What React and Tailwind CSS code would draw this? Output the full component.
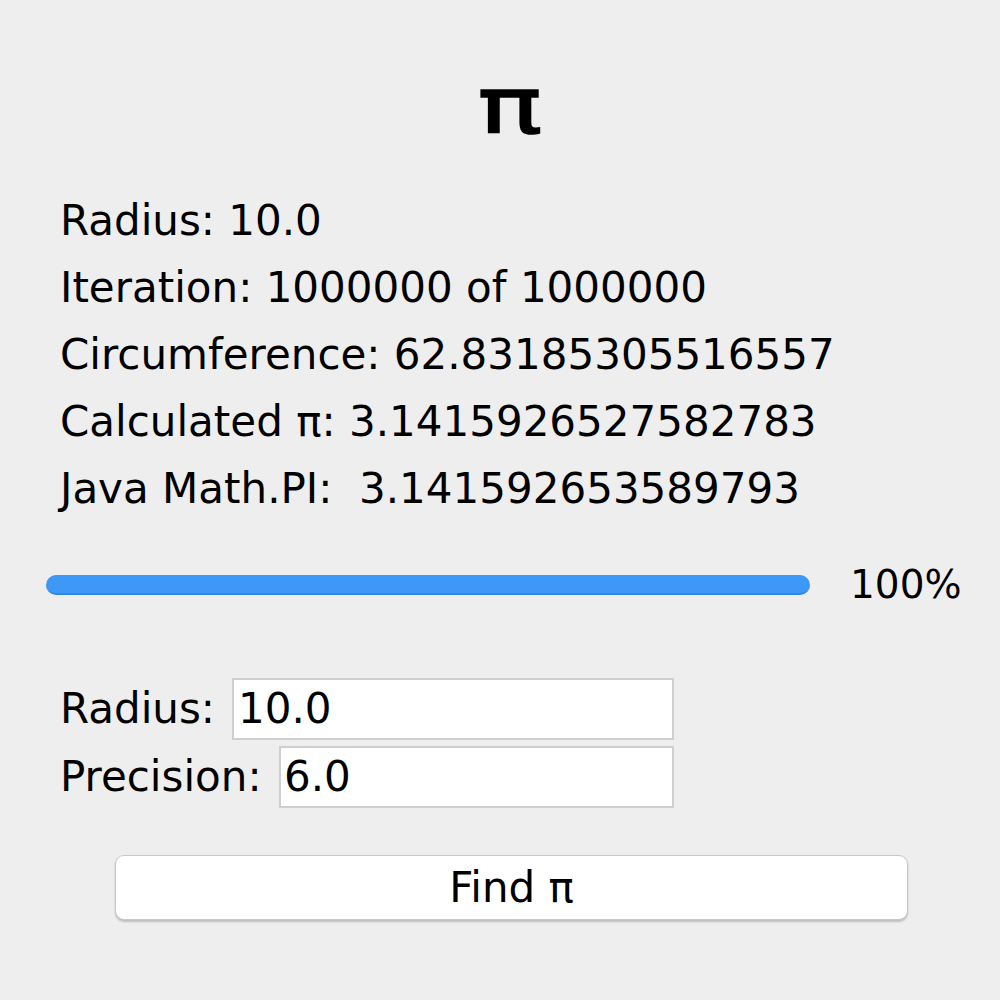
export default function App() {
  const font = { fontFamily: '"DejaVu Sans", "Liberation Sans", sans-serif' };
  return (
    <div className="w-[1000px] h-[1000px] bg-[#eeeeee] text-black" style={font}>
      <div className="flex flex-col">
        <div className="flex justify-center pt-[67px] pl-[20px]">
          <span className="text-[79px] leading-[78px] inline-block scale-x-[1.36] [-webkit-text-stroke:1.5px_black]">π</span>
        </div>
        <div className="flex flex-col pl-[60px] text-[42px] leading-[67px] mt-[42px]">
          <div>Radius: 10.0</div>
          <div>Iteration: 1000000 of 1000000</div>
          <div>Circumference: 62.83185305516557</div>
          <div>Calculated π: 3.1415926527582783</div>
          <div>Java Math.PI:&nbsp; 3.141592653589793</div>
        </div>
        <div className="flex items-center h-[50px] mt-[38px] pl-[46px]">
          <div className="w-[764px] h-[20px] rounded-full bg-[#3d98f8] border-b-2 border-[#2f86e6]" />
          <span className="ml-[40px] text-[39px]">100%</span>
        </div>
        <div className="flex flex-col pl-[60px] mt-[67px] gap-[5px] text-[42px]">
          <div className="flex items-center">
            <span className="w-[172px]">Radius:</span>
            <div className="w-[442px] h-[62px] bg-white border-2 border-[#cfcfcf] flex items-center pl-[4px] text-[42px]">10.0</div>
          </div>
          <div className="flex items-center">
            <span className="w-[219px]">Precision:</span>
            <div className="w-[395px] h-[62px] bg-white border-2 border-[#cfcfcf] flex items-center pl-[3px] text-[42px]">6.0</div>
          </div>
        </div>
        <div className="flex mt-[47px] pl-[115px]">
          <div className="w-[793px] h-[65px] bg-white rounded-[9px] border border-[#c8c8c8] shadow-[0_2px_2px_rgba(0,0,0,0.2)] flex items-center justify-center text-[42px]">
            Find π
          </div>
        </div>
      </div>
    </div>
  );
}
